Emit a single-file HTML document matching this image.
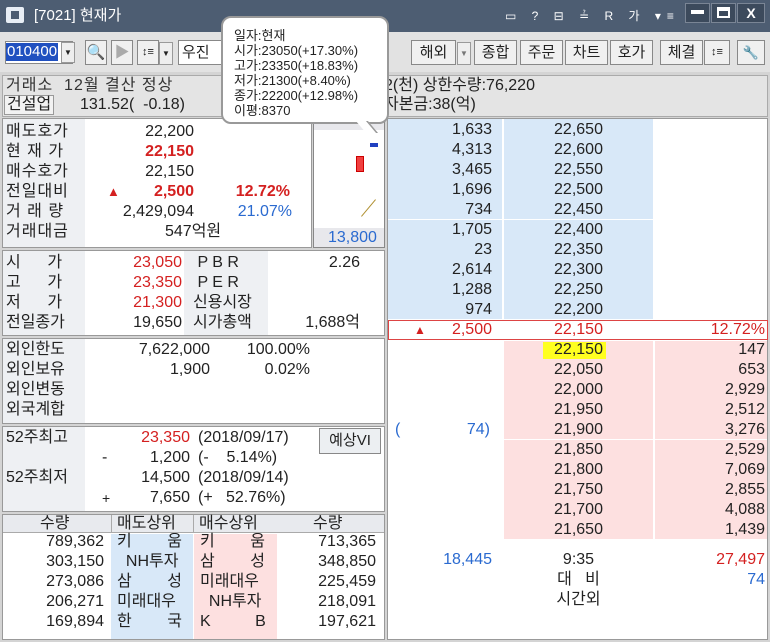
<!DOCTYPE html><html><head><meta charset="utf-8"><style>
*{margin:0;padding:0;box-sizing:border-box}
body{width:770px;height:642px;background:#d4d4d4;font-family:"Liberation Sans","Noto Sans CJK KR",sans-serif;font-size:14px;color:#222;position:relative;overflow:hidden}
.a{position:absolute;white-space:nowrap}
.r{text-align:right}.c{text-align:center}
.red{color:#d42020}.blue{color:#2a6ad0}
.b{font-weight:bold}
.btn{position:absolute;top:40px;height:25px;background:#f0f0f0;border:1px solid #888;font-size:15px;text-align:center;line-height:23px}
.pan{position:absolute;background:#fff;border:1px solid #999}
.lab{position:absolute;background:#eef0f3}
</style></head><body>
<div class="a" style="left:0;top:0;width:770px;height:32px;background:#4d5d72"></div>
<div class="a" style="left:6px;top:7px;width:18px;height:16px;background:#e8eef5;border-radius:2px"></div>
<div class="a" style="left:11px;top:11px;width:8px;height:8px;background:#4d5d72"></div>
<div class="a" style="left:34px;top:7px;color:#fff;font-size:15px;line-height:18px">[7021] 현재가</div>
<div class="a" style="left:505px;top:8px;color:#fff;font-size:12px;letter-spacing:6px;line-height:16px">▭ ? ⊟ ≟ R 가 ▾≡</div>
<div class="a" style="left:685px;top:3px;width:25px;height:20px;background:#3c4a5c;border:1px solid #7a8595"></div>
<div class="a" style="left:691px;top:10px;width:13px;height:4px;background:#fff"></div>
<div class="a" style="left:711px;top:3px;width:25px;height:20px;background:#3c4a5c;border:1px solid #7a8595"></div>
<div class="a" style="left:717px;top:7px;width:13px;height:11px;border:2px solid #fff;border-top-width:4px"></div>
<div class="a" style="left:737px;top:3px;width:28px;height:20px;background:#3c4a5c;border:1px solid #7a8595;color:#fff;font-weight:bold;text-align:center;line-height:18px">X</div>
<div class="a" style="left:0;top:32px;width:770px;height:40px;background:#e2e2e2"></div>
<div class="a" style="left:5px;top:41px;width:68px;height:23px;background:#fff;border:1px solid #888"></div>
<div class="a" style="left:6px;top:43px;background:#2050c0;color:#fff;font-size:15px;padding:0 1px;line-height:18px">010400</div>
<div class="a" style="left:61px;top:42px;width:14px;height:21px;background:#eee;border:1px solid #999;font-size:8px;text-align:center;line-height:20px">▼</div>
<div class="btn" style="left:85px;width:22px">🔍</div>
<div class="btn" style="left:111px;width:22px;color:#aaa">▶</div>
<div class="btn" style="left:137px;width:22px;font-size:11px">↕≡</div>
<div class="a" style="left:159px;top:42px;width:14px;height:23px;background:#eee;border:1px solid #999;font-size:8px;text-align:center;line-height:22px">▼</div>
<div class="a" style="left:178px;top:40px;width:45px;height:25px;background:#fff;border:1px solid #888;font-size:15px;padding:2px 3px;line-height:19px">우진</div>
<div class="btn" style="left:411px;width:45px">해외</div>
<div class="a" style="left:457px;top:42px;width:14px;height:23px;background:#eee;border:1px solid #999;font-size:8px;text-align:center;line-height:22px;color:#777">▼</div>
<div class="btn" style="left:474px;width:43px">종합</div>
<div class="btn" style="left:520px;width:43px">주문</div>
<div class="btn" style="left:565px;width:43px">차트</div>
<div class="btn" style="left:610px;width:43px">호가</div>
<div class="btn" style="left:660px;width:43px">체결</div>
<div class="btn" style="left:704px;width:26px;font-size:11px">↕≡</div>
<div class="btn" style="left:737px;width:28px;font-size:13px">🔧</div>
<div class="a" style="left:2px;top:75px;width:766px;height:42px;background:#e4e4e4;border:1px solid #aaa"></div>
<div class="a" style="left:6px;top:77px;font-size:16px;line-height:18px;color:#333;letter-spacing:1px">거래소&nbsp; 12월 결산 정상</div>
<div class="a" style="left:4px;top:95px;font-size:16px;background:#f2f2f2;border:1px solid #999;padding:0 2px;line-height:18px">건설업</div>
<div class="a" style="left:80px;top:96px;font-size:16px;line-height:18px">131.52(&nbsp; -0.18)</div>
<div class="a" style="left:384px;top:77px;font-size:16px;line-height:18px">2(천) 상한수량:76,220</div>
<div class="a" style="left:384px;top:96px;font-size:16px;line-height:18px">자본금:38(억)</div>
<div class="pan" style="left:2px;top:118px;width:310px;height:130px"></div>
<div class="lab" style="left:3px;top:119px;width:82px;height:128px"></div>
<div class="a" style="left:6px;top:122px;font-size:16px;line-height:20px;letter-spacing:1px">매도호가<br>현&nbsp;재&nbsp;가<br>매수호가<br>전일대비<br>거&nbsp;래&nbsp;량<br>거래대금</div>
<div class="a r" style="left:90px;top:122px;width:104px;font-size:16px;line-height:20px">22,200<br><span class="red b">22,150</span><br>22,150<br><span class="red b">2,500</span><br>2,429,094</div>
<div class="a red" style="left:107px;top:184px;font-size:13px;line-height:16px">▲</div>
<div class="a r" style="left:200px;top:182px;width:90px;font-size:16px;line-height:20px"><span class="red b">12.72%</span></div>
<div class="a r blue" style="left:200px;top:202px;width:92px;font-size:16px;line-height:20px">21.07%</div>
<div class="a" style="left:165px;top:222px;font-size:16px;line-height:20px">547억원</div>
<div class="pan" style="left:313px;top:118px;width:72px;height:130px;border-color:#888"></div>
<div class="a" style="left:314px;top:119px;width:70px;height:11px;background:#e8e8ec"></div>
<div class="a" style="left:314px;top:228px;width:70px;height:19px;background:#e8e8ec"></div>
<div class="a blue" style="left:328px;top:229px;font-size:16px;line-height:18px">13,800</div>
<div class="a" style="left:370px;top:143px;width:8px;height:4px;background:#2040c0"></div>
<div class="a" style="left:356px;top:156px;width:8px;height:16px;background:#f04040;border:1px solid #c00"></div>
<div class="a" style="left:368px;top:197px;width:1px;height:22px;background:#b09030;transform:rotate(40deg)"></div>
<div class="pan" style="left:2px;top:250px;width:383px;height:86px"></div>
<div class="lab" style="left:3px;top:251px;width:82px;height:84px"></div>
<div class="a" style="left:6px;top:253px;font-size:16px;line-height:20px">시&nbsp;&nbsp;&nbsp;&nbsp;&nbsp;&nbsp;가<br>고&nbsp;&nbsp;&nbsp;&nbsp;&nbsp;&nbsp;가<br>저&nbsp;&nbsp;&nbsp;&nbsp;&nbsp;&nbsp;가<br>전일종가</div>
<div class="a r" style="left:90px;top:253px;width:92px;font-size:16px;line-height:20px"><span class="red">23,050</span><br><span class="red">23,350</span><br><span class="red">21,300</span><br>19,650</div>
<div class="lab" style="left:184px;top:251px;width:84px;height:84px"></div>
<div class="a" style="left:193px;top:253px;font-size:16px;line-height:20px">&nbsp;P B R<br>&nbsp;P E R<br>신용시장<br>시가총액</div>
<div class="a r" style="left:270px;top:253px;width:90px;font-size:16px;line-height:20px">2.26<br><br><br>1,688억</div>
<div class="pan" style="left:2px;top:338px;width:383px;height:86px"></div>
<div class="lab" style="left:3px;top:339px;width:82px;height:84px"></div>
<div class="a" style="left:6px;top:340px;font-size:16px;line-height:20px">외인한도<br>외인보유<br>외인변동<br>외국계합</div>
<div class="a r" style="left:90px;top:340px;width:120px;font-size:16px;line-height:20px">7,622,000<br>1,900</div>
<div class="a r" style="left:220px;top:340px;width:90px;font-size:16px;line-height:20px">100.00%<br>0.02%</div>
<div class="pan" style="left:2px;top:426px;width:383px;height:86px"></div>
<div class="lab" style="left:3px;top:427px;width:82px;height:84px"></div>
<div class="a" style="left:6px;top:428px;font-size:16px;line-height:20px">52주최고<br><br>52주최저</div>
<div class="a" style="left:102px;top:448px;font-size:16px;line-height:20px">-</div>
<div class="a" style="left:102px;top:488px;font-size:14px;line-height:20px">+</div>
<div class="a r" style="left:110px;top:428px;width:80px;font-size:16px;line-height:20px"><span class="red">23,350</span><br>1,200<br>14,500<br>7,650</div>
<div class="a" style="left:198px;top:428px;font-size:16px;line-height:20px;white-space:pre">(2018/09/17)
(-    5.14%)
(2018/09/14)
(+   52.76%)</div>
<div class="a" style="left:319px;top:428px;width:62px;height:26px;background:#eceff2;border:1px solid #888;font-size:15px;text-align:center;line-height:24px">예상VI</div>
<div class="pan" style="left:2px;top:514px;width:383px;height:126px"></div>
<div class="a" style="left:3px;top:515px;width:381px;height:18px;background:#e8eaee;border-bottom:1px solid #aaa"></div>
<div class="a" style="left:40px;top:515px;font-size:16px;line-height:18px">수량</div>
<div class="a" style="left:111px;top:515px;height:18px;font-size:16px;line-height:18px;border-left:1px solid #aaa;padding-left:5px">매도상위</div>
<div class="a" style="left:193px;top:515px;height:18px;font-size:16px;line-height:18px;border-left:1px solid #aaa;padding-left:5px">매수상위</div>
<div class="a" style="left:313px;top:515px;font-size:16px;line-height:18px">수량</div>
<div class="a" style="left:111px;top:534px;width:82px;height:105px;background:#d8e8f8"></div>
<div class="a" style="left:194px;top:534px;width:83px;height:105px;background:#fde0e0"></div>
<div class="a r" style="left:10px;top:532px;width:94px;font-size:16px;line-height:20px">789,362<br>303,150<br>273,086<br>206,271<br>169,894</div>
<div class="a" style="left:117px;top:532px;width:70px;font-size:16px;line-height:20px">키&nbsp;&nbsp;&nbsp;&nbsp;&nbsp;&nbsp;&nbsp;&nbsp;움<br>&nbsp;&nbsp;NH투자<br>삼&nbsp;&nbsp;&nbsp;&nbsp;&nbsp;&nbsp;&nbsp;&nbsp;성<br>미래대우<br>한&nbsp;&nbsp;&nbsp;&nbsp;&nbsp;&nbsp;&nbsp;&nbsp;국</div>
<div class="a" style="left:200px;top:532px;width:74px;font-size:16px;line-height:20px">키&nbsp;&nbsp;&nbsp;&nbsp;&nbsp;&nbsp;&nbsp;&nbsp;움<br>삼&nbsp;&nbsp;&nbsp;&nbsp;&nbsp;&nbsp;&nbsp;&nbsp;성<br>미래대우<br>&nbsp;&nbsp;NH투자<br>K&nbsp;&nbsp;&nbsp;&nbsp;&nbsp;&nbsp;&nbsp;&nbsp;&nbsp;&nbsp;B</div>
<div class="a r" style="left:280px;top:532px;width:96px;font-size:16px;line-height:20px">713,365<br>348,850<br>225,459<br>218,091<br>197,621</div>
<div class="pan" style="left:387px;top:118px;width:381px;height:522px"></div>
<div class="a" style="left:388px;top:119px;width:114px;height:200px;background:#d8e8f8"></div>
<div class="a" style="left:504px;top:119px;width:149px;height:200px;background:#d8e8f8"></div>
<div class="a" style="left:388px;top:219px;width:265px;height:1px;background:#fff"></div>
<div class="a r" style="left:390px;top:120px;width:102px;font-size:16px;line-height:20px">1,633<br>4,313<br>3,465<br>1,696<br>734<br>1,705<br>23<br>2,614<br>1,288<br>974</div>
<div class="a c" style="left:504px;top:120px;width:149px;font-size:16px;line-height:20px">22,650<br>22,600<br>22,550<br>22,500<br>22,450<br>22,400<br>22,350<br>22,300<br>22,250<br>22,200</div>
<div class="a" style="left:388px;top:320px;width:380px;height:20px;border:1px solid #d44;background:#fff"></div>
<div class="a red" style="left:414px;top:323px;font-size:12px;line-height:14px">▲</div>
<div class="a r red" style="left:390px;top:320px;width:102px;font-size:16px;line-height:20px">2,500</div>
<div class="a c red" style="left:504px;top:320px;width:149px;font-size:16px;line-height:20px">22,150</div>
<div class="a r red" style="left:660px;top:320px;width:105px;font-size:16px;line-height:20px">12.72%</div>
<div class="a" style="left:504px;top:341px;width:149px;height:198px;background:#fde0e0"></div>
<div class="a" style="left:655px;top:341px;width:112px;height:198px;background:#fde0e0"></div>
<div class="a" style="left:504px;top:439px;width:263px;height:1px;background:#fff"></div>
<div class="a" style="left:543px;top:342px;width:63px;height:17px;background:#ffff20"></div>
<div class="a c" style="left:504px;top:340px;width:149px;font-size:16px;line-height:20px">22,150<br>22,050<br>22,000<br>21,950<br>21,900<br>21,850<br>21,800<br>21,750<br>21,700<br>21,650</div>
<div class="a r" style="left:660px;top:340px;width:105px;font-size:16px;line-height:20px">147<br>653<br>2,929<br>2,512<br>3,276<br>2,529<br>7,069<br>2,855<br>4,088<br>1,439</div>
<div class="a blue" style="left:395px;top:420px;font-size:16px;line-height:20px">(</div>
<div class="a r blue" style="left:420px;top:420px;width:70px;font-size:16px;line-height:20px">74)</div>
<div class="a r blue" style="left:400px;top:550px;width:92px;font-size:16px;line-height:20px">18,445</div>
<div class="a c" style="left:504px;top:550px;width:149px;font-size:16px;line-height:20px">9:35<br>대&nbsp;&nbsp;&nbsp;비<br>시간외</div>
<div class="a r" style="left:660px;top:550px;width:105px;font-size:16px;line-height:20px"><span class="red">27,497</span><br><span class="blue">74</span></div>
<div class="a" style="left:221px;top:16px;width:168px;height:108px;background:#fff;border:2px solid #999;border-radius:10px"></div>
<div class="a" style="left:361px;top:121px;width:12px;height:12px;background:#fff;border-right:2px solid #999;transform:skewX(40deg)"></div>
<div class="a" style="left:234px;top:28px;font-size:13px;line-height:15px;color:#222">일자:현재<br>시가:23050(+17.30%)<br>고가:23350(+18.83%)<br>저가:21300(+8.40%)<br>종가:22200(+12.98%)<br>이평:8370</div>
</body></html>
